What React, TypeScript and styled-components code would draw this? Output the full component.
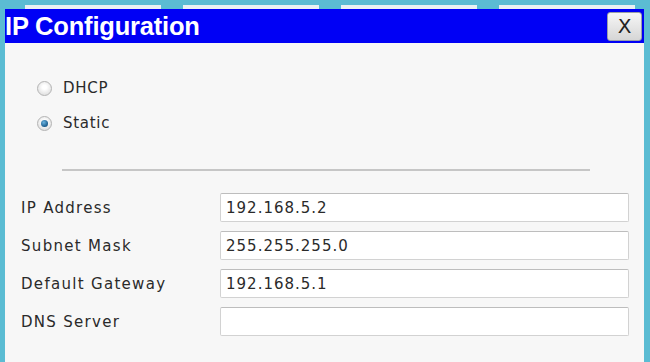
import React, { useState } from 'react';
import styled, { createGlobalStyle } from 'styled-components';

const GlobalStyle = createGlobalStyle`
  html, body {
    margin: 0;
    padding: 0;
    background: #5bbcd3;
  }
  body {
    font-family: "DejaVu Sans", Verdana, sans-serif;
  }
`;

const Screen = styled.div`
  width: 650px;
  height: 362px;
  overflow: hidden;
  background: #5bbcd3;
  display: flex;
  flex-direction: column;
`;

const TabStrip = styled.div`
  height: 9px;
  display: flex;
  gap: 22px;
  padding-left: 25px;
  padding-top: 5px;
  box-sizing: border-box;
`;

const Tab = styled.div`
  width: 136px;
  height: 4px;
  background: #e9f1f3;
`;

const Window = styled.div`
  margin: 0 6px 0 5px;
  flex: 1;
  display: flex;
  flex-direction: column;
  background: #f7f7f7;
`;

const TitleBar = styled.div`
  height: 34px;
  background: #0000f5;
  display: flex;
  align-items: center;
  justify-content: space-between;
  padding: 0 2px 0 0;
  box-sizing: border-box;
`;

const Title = styled.div`
  color: #ffffff;
  font-family: "Liberation Sans", Arial, sans-serif;
  font-weight: bold;
  font-size: 25.5px;
  letter-spacing: -0.2px;
  margin-top: 1px;
`;

const CloseButton = styled.button`
  width: 35px;
  height: 29px;
  border: 1px solid #9aa0a8;
  border-radius: 3px;
  background: linear-gradient(#f6f6f6, #d6d6d6);
  font-family: "DejaVu Sans", Verdana, sans-serif;
  font-size: 20px;
  color: #222;
  padding: 0;
  display: flex;
  align-items: center;
  justify-content: center;
`;

const Body = styled.div`
  padding: 34px 0 0 16px;
  display: flex;
  flex-direction: column;
`;

const RadioGroup = styled.div`
  display: flex;
  flex-direction: column;
  gap: 13px;
  padding-left: 16px;
`;

const RadioRow = styled.label`
  display: flex;
  align-items: center;
  gap: 11px;
  font-size: 15px;
  letter-spacing: 0.7px;
  color: #2a2a2a;
  height: 22px;
`;

const RadioDot = styled.span<{ $checked: boolean }>`
  width: 13px;
  height: 13px;
  flex: none;
  border-radius: 50%;
  border: 1px solid #b4b4b4;
  background: radial-gradient(circle at 50% 40%, #ffffff 20%, #d4d4d4);
  display: flex;
  align-items: center;
  justify-content: center;
  &::after {
    content: '';
    display: ${(p) => (p.$checked ? 'block' : 'none')};
    width: 7px;
    height: 7px;
    border-radius: 50%;
    background: radial-gradient(circle at 40% 35%, #6bb4e0, #0f4f80 80%);
  }
`;

const Divider = styled.hr`
  margin: 35px 0 0 41px;
  width: 528px;
  border: none;
  border-top: 2px solid #c6c6c6;
`;

const Fields = styled.div`
  margin-top: 22px;
  display: flex;
  flex-direction: column;
  gap: 9px;
`;

const FieldRow = styled.div`
  display: flex;
  align-items: center;
`;

const Label = styled.div`
  width: 199px;
  font-size: 15px;
  letter-spacing: 1.3px;
  color: #2a2a2a;
`;

const Input = styled.input`
  width: 409px;
  height: 29px;
  box-sizing: border-box;
  border: 1px solid #d2d2d2;
  border-top-color: #bdbdbd;
  border-radius: 2px;
  background: #fff;
  padding: 0 5px;
  font-family: "DejaVu Sans", Verdana, sans-serif;
  font-size: 15px;
  letter-spacing: 1px;
  color: #2a2a2a;
  outline: none;
`;

const fields = [
  { label: 'IP Address', value: '192.168.5.2' },
  { label: 'Subnet Mask', value: '255.255.255.0' },
  { label: 'Default Gateway', value: '192.168.5.1' },
  { label: 'DNS Server', value: '' },
];

const App = () => {
  const [mode, setMode] = useState('static');

  return (
    <Screen>
      <GlobalStyle />
      <TabStrip>
        <Tab />
        <Tab />
        <Tab />
        <Tab />
      </TabStrip>
      <Window>
        <TitleBar>
          <Title>IP Configuration</Title>
          <CloseButton>X</CloseButton>
        </TitleBar>
        <Body>
          <RadioGroup>
            <RadioRow onClick={() => setMode('dhcp')}>
              <RadioDot $checked={mode === 'dhcp'} />
              DHCP
            </RadioRow>
            <RadioRow onClick={() => setMode('static')}>
              <RadioDot $checked={mode === 'static'} />
              Static
            </RadioRow>
          </RadioGroup>
          <Divider />
          <Fields>
            {fields.map((f) => (
              <FieldRow key={f.label}>
                <Label>{f.label}</Label>
                <Input defaultValue={f.value} />
              </FieldRow>
            ))}
          </Fields>
        </Body>
      </Window>
    </Screen>
  );
};

export default App;
